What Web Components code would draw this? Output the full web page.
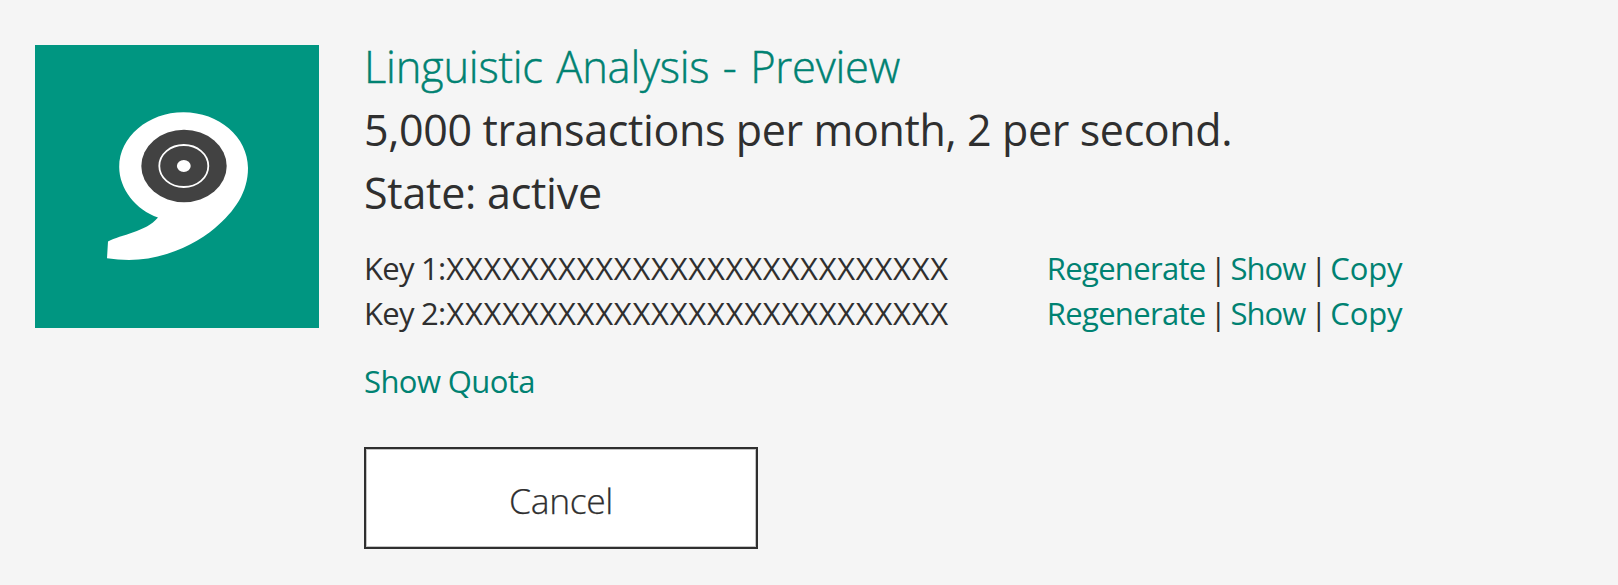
<!DOCTYPE html>
<html lang="en">
<head>
<meta charset="utf-8">
<title>Linguistic Analysis - Preview</title>
<style>
body { margin: 0; background: #f5f5f5; font-family: "Open Sans", "Noto Sans", sans-serif; color: #2f2f2f; }
</style>
</head>
<body>
<subscription-card>
  <product-tile slot="tile"></product-tile>
  <text-line kind="title">Linguistic Analysis - Preview</text-line>
  <text-line kind="plan">5,000 transactions per month, 2 per second.</text-line>
  <text-line kind="state">State: active</text-line>
  <key-list>
    <key-row label="Key 1:">XXXXXXXXXXXXXXXXXXXXXXXXXXX</key-row>
    <key-row label="Key 2:">XXXXXXXXXXXXXXXXXXXXXXXXXXX</key-row>
  </key-list>
  <text-line kind="quota">Show Quota</text-line>
  <outline-button>Cancel</outline-button>
</subscription-card>
<script>
const define = (name, html, setup) => customElements.define(name, class extends HTMLElement {
  constructor() {
    super();
    this.attachShadow({ mode: 'open' }).innerHTML = html;
  }
  connectedCallback() { if (setup) setup(this); }
});

define('subscription-card', `
<style>
:host { display: flex; align-items: flex-start; gap: 45px; padding: 35px 35px 0; box-sizing: border-box; height: 585px; }
.body { flex: 1; display: flex; flex-direction: column; align-items: flex-start; }
</style>
<slot name="tile"></slot>
<div class="body"><slot></slot></div>`);

define('product-tile', `
<style>
:host { display: block; width: 284px; height: 283px; margin-top: 10px; background: #009681; }
svg { display: block; }
</style>
<svg width="284" height="283" viewBox="35 45 284 283" aria-hidden="true">
  <path fill="#fff" d="M183.5 112.2C219 112.2 248 137 248 168C248 192 235 211 215 228C194 246 161 260 129 260Q118 260 107 258.2L108 241.5C121 234.500 146 232 158 217.500C136 210 119.200 189 119.200 167C119.200 137 148 112.200 183.500 112.200Z"/>
  <ellipse cx="184" cy="166" rx="42.700" ry="36.200" fill="#424242"/>
  <ellipse cx="183.800" cy="166" rx="24.500" ry="21" fill="none" stroke="#fff" stroke-width="1.800"/>
  <ellipse cx="183.800" cy="166" rx="6.900" ry="5.900" fill="#fff"/>
</svg>`);

define('text-line', `
<style>
:host { display: block; white-space: nowrap; font-size: 43px; line-height: 63px; }
:host([kind=title]) { font-size: 43.5px; font-weight: 300; letter-spacing: -.25px; word-spacing: 2.5px; -webkit-text-stroke: .45px #008272; color: #008272; }
:host([kind=plan]) { letter-spacing: -.37px; }
:host([kind=state]) { letter-spacing: -.25px; }
:host([kind=quota]) { font-size: 31px; line-height: 45px; letter-spacing: -.58px; color: #008272; margin-top: 23px; }
</style>
<slot></slot>`);

define('key-list', `
<style>:host { display: grid; margin-top: 22px; }</style>
<slot></slot>`);

define('key-row', `
<style>
:host { display: grid; grid-template-columns: 82.3px 600.500px 163px 20.700px 79.800px 20px auto; font-size: 31px; line-height: 45px; white-space: nowrap; }
.label { letter-spacing: -.75px; }
.value { letter-spacing: .71px; }
a { color: #008272; }
.regenerate { letter-spacing: -.68px; }
.show { letter-spacing: -1px; }
.copy { letter-spacing: -.1px; }
</style>
<span class="label"></span><span class="value"><slot></slot></span>
<a class="regenerate">Regenerate</a><span>|</span><a class="show">Show</a><span>|</span><a class="copy">Copy</a>`,
host => { host.shadowRoot.querySelector('.label').textContent = host.getAttribute('label'); });

define('outline-button', `
<style>
:host { display: block; margin-top: 43px; }
button { display: flex; align-items: center; justify-content: center; width: 394px; height: 102px; padding: 4px 0 0; box-sizing: border-box; border: 2px solid #2f2f2f; box-shadow: inset 0 0 0 1px #c4c4c4; border-radius: 0; background: #fff; color: #2f2f2f; font: 300 35.500px/48px "Open Sans", "Noto Sans", sans-serif; letter-spacing: -.4px; -webkit-text-stroke: .25px #2f2f2f; }
</style>
<button type="button"><slot></slot></button>`);
</script>
</body>
</html>
